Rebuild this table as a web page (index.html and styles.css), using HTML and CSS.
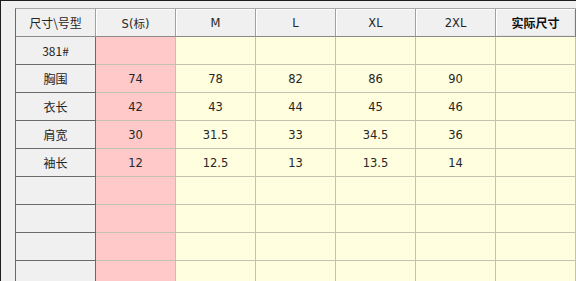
FILE: index.html
```html
<!DOCTYPE html>
<html>
<head>
<meta charset="utf-8">
<link rel="stylesheet" href="styles.css">
</head>
<body>
<div class="frame">
<table class="grid">
  <colgroup>
    <col class="c"><col class="c"><col class="c"><col class="c"><col class="c"><col class="c"><col class="c">
  </colgroup>
  <thead>
    <tr>
      <th class="corner">尺寸\号型</th>
      <th>S(标)</th>
      <th>M</th>
      <th>L</th>
      <th>XL</th>
      <th>2XL</th>
      <th class="actual">实际尺寸</th>
    </tr>
  </thead>
  <tbody>
    <tr><th class="rh">381#</th><td class="s"></td><td></td><td></td><td></td><td></td><td></td></tr>
    <tr><th class="rh">胸围</th><td class="s">74</td><td>78</td><td>82</td><td>86</td><td>90</td><td></td></tr>
    <tr><th class="rh">衣长</th><td class="s">42</td><td>43</td><td>44</td><td>45</td><td>46</td><td></td></tr>
    <tr><th class="rh">肩宽</th><td class="s">30</td><td>31.5</td><td>33</td><td>34.5</td><td>36</td><td></td></tr>
    <tr><th class="rh">袖长</th><td class="s">12</td><td>12.5</td><td>13</td><td>13.5</td><td>14</td><td></td></tr>
    <tr><th class="rh"></th><td class="s"></td><td></td><td></td><td></td><td></td><td></td></tr>
    <tr><th class="rh"></th><td class="s"></td><td></td><td></td><td></td><td></td><td></td></tr>
    <tr><th class="rh"></th><td class="s"></td><td></td><td></td><td></td><td></td><td></td></tr>
    <tr><th class="rh"></th><td class="s"></td><td></td><td></td><td></td><td></td><td></td></tr>
  </tbody>
</table>
</div>
</body>
</html>
```

FILE: styles.css
```css
html, body {
  margin: 0;
  padding: 0;
  background: #f0f0f0;
  overflow: hidden;
}
body {
  width: 576px;
  height: 281px;
  font-family: "DejaVu Sans", "Noto Sans CJK SC", sans-serif;
  font-size: 11.5px;
  color: #262626;
}
.frame {
  box-sizing: border-box;
  height: 281px;
  border-top: 1px solid #1e1e1e;
  border-left: 1px solid #1e1e1e;
  padding: 7px 0 0 14px;
}
.grid {
  border-collapse: separate;
  border-spacing: 0;
  table-layout: fixed;
  width: 561px;
  border-left: 1px solid #6a6a6a;
  border-top: 1px solid #a8a8a8;
}
.c { width: 80px; }
.grid th, .grid td {
  box-sizing: border-box;
  height: 28px;
  padding: 0;
  text-align: center;
  vertical-align: middle;
  border-right: 1px solid #c2c1b2;
  border-bottom: 1px solid #c2c1b2;
  font-weight: normal;
  white-space: nowrap;
  overflow: hidden;
}
.grid thead th {
  background: #f0f0f0;
  border-right: 1px solid #a0a0a0;
  border-bottom: 1px solid #8a8a8a;
  box-shadow: inset 1px 1px 0 #ffffff;
}
.grid thead th.corner {
  box-shadow: none;
  font-family: "Noto Sans CJK SC", sans-serif;
  font-size: 12px;
}
.grid thead th.actual {
  font-family: "Noto Sans CJK SC", sans-serif;
  font-size: 12px;
  font-weight: bold;
  color: #111;
  border-right: 1px solid #7a7a7a;
  box-shadow: inset 1px 1px 0 #ffffff, inset 0 0 0 1px #e4e4e4;
}
.grid th.rh {
  background: #f0f0f0;
  border-right: 1px solid #6a6a6a;
  border-bottom: 1px solid #6a6a6a;
  font-family: "Noto Sans CJK SC", "DejaVu Sans", sans-serif;
  font-size: 12px;
}
.grid td {
  background: #ffffe0;
}
.grid td.s {
  background: #ffc9c9;
}
```
